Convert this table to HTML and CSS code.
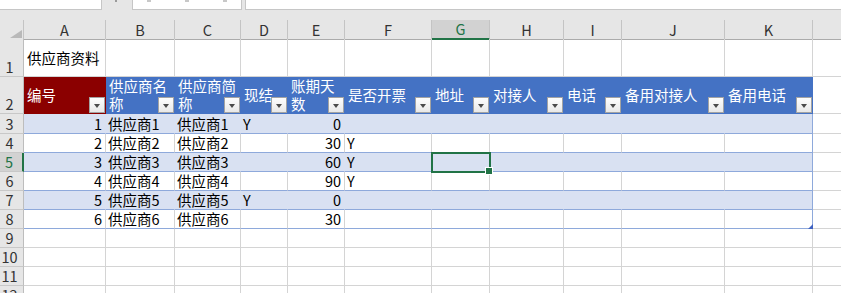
FILE: index.html
```html
<!DOCTYPE html>
<html lang="zh-CN">
<head>
  <meta charset="utf-8">
  <title>供应商资料</title>
  <link rel="stylesheet" href="styles.css">
</head>
<body>
  <div class="toolbar">
    <div class="namebox"></div>
    <div class="dots"></div>
    <div class="fxbox"><i></i><i></i><i></i></div>
    <div class="formula"></div>
  </div>

  <div class="sheet">
    <div class="row colhead">
      <div class="corner"><span></span></div>
      <div>A</div><div>B</div><div>C</div><div>D</div><div>E</div><div>F</div>
      <div class="active">G</div><div>H</div><div>I</div><div>J</div><div>K</div><div></div>
    </div>

    <div class="row r-title">
      <div class="rh">1</div>
      <div class="cell title">供应商资料</div>
      <div class="cell"></div><div class="cell"></div><div class="cell"></div><div class="cell"></div>
      <div class="cell"></div><div class="cell"></div><div class="cell"></div><div class="cell"></div>
      <div class="cell"></div><div class="cell"></div><div class="cell"></div>
    </div>

    <div class="row r-head">
      <div class="rh">2</div>
      <div class="th red"><span>编号</span><i class="filter"></i></div>
      <div class="th"><span>供应商名称</span><i class="filter"></i></div>
      <div class="th"><span>供应商简称</span><i class="filter"></i></div>
      <div class="th"><span>现结</span><i class="filter"></i></div>
      <div class="th"><span>账期天数</span><i class="filter"></i></div>
      <div class="th"><span>是否开票</span><i class="filter"></i></div>
      <div class="th"><span>地址</span><i class="filter"></i></div>
      <div class="th"><span>对接人</span><i class="filter"></i></div>
      <div class="th"><span>电话</span><i class="filter"></i></div>
      <div class="th"><span>备用对接人</span><i class="filter"></i></div>
      <div class="th"><span>备用电话</span><i class="filter"></i></div>
      <div class="cell"></div>
    </div>

    <div class="row r-first band">
      <div class="rh">3</div>
      <div class="cell num">1</div><div class="cell">供应商1</div><div class="cell">供应商1</div>
      <div class="cell">Y</div><div class="cell num">0</div><div class="cell"></div>
      <div class="cell"></div><div class="cell"></div><div class="cell"></div>
      <div class="cell"></div><div class="cell"></div><div class="cell"></div>
    </div>

    <div class="row plain">
      <div class="rh">4</div>
      <div class="cell num">2</div><div class="cell">供应商2</div><div class="cell">供应商2</div>
      <div class="cell"></div><div class="cell num">30</div><div class="cell">Y</div>
      <div class="cell"></div><div class="cell"></div><div class="cell"></div>
      <div class="cell"></div><div class="cell"></div><div class="cell"></div>
    </div>

    <div class="row band">
      <div class="rh current">5</div>
      <div class="cell num">3</div><div class="cell">供应商3</div><div class="cell">供应商3</div>
      <div class="cell"></div><div class="cell num">60</div><div class="cell">Y</div>
      <div class="cell selected"><span class="sel"></span></div><div class="cell"></div><div class="cell"></div>
      <div class="cell"></div><div class="cell"></div><div class="cell"></div>
    </div>

    <div class="row plain">
      <div class="rh">6</div>
      <div class="cell num">4</div><div class="cell">供应商4</div><div class="cell">供应商4</div>
      <div class="cell"></div><div class="cell num">90</div><div class="cell">Y</div>
      <div class="cell"></div><div class="cell"></div><div class="cell"></div>
      <div class="cell"></div><div class="cell"></div><div class="cell"></div>
    </div>

    <div class="row band">
      <div class="rh">7</div>
      <div class="cell num">5</div><div class="cell">供应商5</div><div class="cell">供应商5</div>
      <div class="cell">Y</div><div class="cell num">0</div><div class="cell"></div>
      <div class="cell"></div><div class="cell"></div><div class="cell"></div>
      <div class="cell"></div><div class="cell"></div><div class="cell"></div>
    </div>

    <div class="row plain">
      <div class="rh">8</div>
      <div class="cell num">6</div><div class="cell">供应商6</div><div class="cell">供应商6</div>
      <div class="cell"></div><div class="cell num">30</div><div class="cell"></div>
      <div class="cell"></div><div class="cell"></div><div class="cell"></div>
      <div class="cell"></div><div class="cell grip-cell"><span class="grip"></span></div><div class="cell"></div>
    </div>

    <div class="row">
      <div class="rh">9</div>
      <div class="cell"></div><div class="cell"></div><div class="cell"></div><div class="cell"></div>
      <div class="cell"></div><div class="cell"></div><div class="cell"></div><div class="cell"></div>
      <div class="cell"></div><div class="cell"></div><div class="cell"></div><div class="cell"></div>
    </div>

    <div class="row">
      <div class="rh">10</div>
      <div class="cell"></div><div class="cell"></div><div class="cell"></div><div class="cell"></div>
      <div class="cell"></div><div class="cell"></div><div class="cell"></div><div class="cell"></div>
      <div class="cell"></div><div class="cell"></div><div class="cell"></div><div class="cell"></div>
    </div>

    <div class="row">
      <div class="rh">11</div>
      <div class="cell"></div><div class="cell"></div><div class="cell"></div><div class="cell"></div>
      <div class="cell"></div><div class="cell"></div><div class="cell"></div><div class="cell"></div>
      <div class="cell"></div><div class="cell"></div><div class="cell"></div><div class="cell"></div>
    </div>

    <div class="row">
      <div class="rh">12</div>
      <div class="cell"></div><div class="cell"></div><div class="cell"></div><div class="cell"></div>
      <div class="cell"></div><div class="cell"></div><div class="cell"></div><div class="cell"></div>
      <div class="cell"></div><div class="cell"></div><div class="cell"></div><div class="cell"></div>
    </div>
  </div>
</body>
</html>
```

FILE: styles.css
```css
html {
  font-family: "Noto Sans CJK SC", "Liberation Sans", sans-serif;
}

body {
  margin: 0;
  font-size: 14.5px;
  color: #000;
  background: #fff;
  overflow: hidden;
}

/* formula bar strip */
.toolbar {
  display: flex;
  align-items: flex-start;
  height: 20px;
  background: #e6e6e6;
}

.namebox, .fxbox, .formula {
  box-sizing: border-box;
  height: 10px;
  background: #fff;
  border-bottom: 1px solid #c6c6c6;
}

.namebox {
  width: 102px;
  border-right: 1px solid #c6c6c6;
}

.dots {
  width: 2px;
  height: 2px;
  margin: 0 15px 0 13px;
  background: #9a9a9a;
}

.fxbox {
  display: flex;
  gap: 34px;
  width: 110px;
  padding-left: 14px;
  border-left: 1px solid #c6c6c6;
  border-right: 1px solid #c6c6c6;
}

.fxbox i {
  width: 4px;
  height: 2px;
  background: #c8c8c8;
}

.formula {
  flex: 1;
  margin-left: 3px;
  border-left: 1px solid #c6c6c6;
}

/* grid */
.row {
  display: grid;
  grid-template-columns: 24px 82px 69px 66px 47px 57px 87px 58px 74px 58px 103px 88px 1fr;
  height: 19px;
}

.row > div {
  box-sizing: border-box;
  display: flex;
  align-items: center;
  padding: 0 2px;
  line-height: 18px;
  white-space: nowrap;
  border-right: 1px solid #d4d4d4;
  border-bottom: 1px solid #d4d4d4;
}

.row > div:last-child {
  border-right: none;
}

.r-title { height: 38px; }
.r-head { height: 37px; }
.r-first { height: 20px; }

/* column letters */
.colhead {
  background: #e6e6e6;
  color: #333;
}

.colhead > div {
  justify-content: center;
  border-right-color: #c4c4c4;
  border-bottom-color: #ababab;
}

.colhead > .active {
  background: #d2d2d2;
  color: #217346;
  border-bottom: 2px solid #217346;
}

.colhead > .corner {
  justify-content: flex-end;
  align-items: flex-end;
  padding: 0 1px 1px 0;
}

.corner span {
  width: 12px;
  height: 8px;
  background: #b9b9b9;
  clip-path: polygon(100% 0, 100% 100%, 0 100%);
}

/* row numbers */
.row > .rh {
  justify-content: center;
  align-items: flex-end;
  padding: 0 4px 0 0;
  background: #e6e6e6;
  color: #333;
  border-right-color: #bdbdbd;
  border-bottom-color: #c8c8c8;
}

.row > .rh.current {
  background: #d2d2d2;
  color: #217346;
  border-right: 2px solid #217346;
}

.cell.num {
  justify-content: flex-end;
  padding-right: 3px;
}

.cell.title {
  padding-left: 3px;
}

/* table header */
.row > .th {
  position: relative;
  padding: 0 1px 0 3px;
  white-space: normal;
  color: #fff;
  background: #4472c4;
  border-right-color: #4472c4;
  border-bottom-color: #4472c4;
}

.row > .th.red {
  background: #8b0000;
  border-right-color: #8b0000;
  border-bottom-color: #8b0000;
}

.filter {
  position: absolute;
  right: 0;
  bottom: 0;
  box-sizing: border-box;
  width: 16px;
  height: 16px;
  display: flex;
  align-items: center;
  justify-content: center;
  border: 1px solid #a3a3a3;
  background: linear-gradient(#fdfdfd, #e8e8e8);
}

.filter::after {
  content: "";
  margin-top: 2px;
  border-left: 3.5px solid transparent;
  border-right: 3.5px solid transparent;
  border-top: 4px solid #4a4a4a;
}

/* banded table rows */
.band > .cell {
  background: #d9e1f2;
  border-right-color: #d9e1f2;
  border-bottom-color: #8ea9db;
}

.plain > .cell {
  border-bottom-color: #8ea9db;
}

.band > .cell:nth-last-child(2),
.plain > .cell:nth-last-child(2) {
  border-right-color: #8ea9db;
}

.band > .cell:last-child,
.plain > .cell:last-child {
  background: #fff;
  border-bottom-color: #d4d4d4;
}

/* active cell */
.cell.selected {
  position: relative;
}

.sel {
  position: absolute;
  left: -1px;
  top: -1px;
  width: 60px;
  height: 21px;
  box-sizing: border-box;
  border: 2px solid #217346;
}

.sel::after {
  content: "";
  position: absolute;
  right: -4px;
  bottom: -4px;
  width: 6px;
  height: 6px;
  background: #217346;
  border: 1px solid #fff;
}

/* table resize grip */
.cell.grip-cell {
  position: relative;
}

.grip {
  position: absolute;
  right: -1px;
  bottom: -1px;
  width: 5px;
  height: 5px;
  background: #4063c2;
  clip-path: polygon(100% 0, 100% 100%, 0 100%);
}
```
